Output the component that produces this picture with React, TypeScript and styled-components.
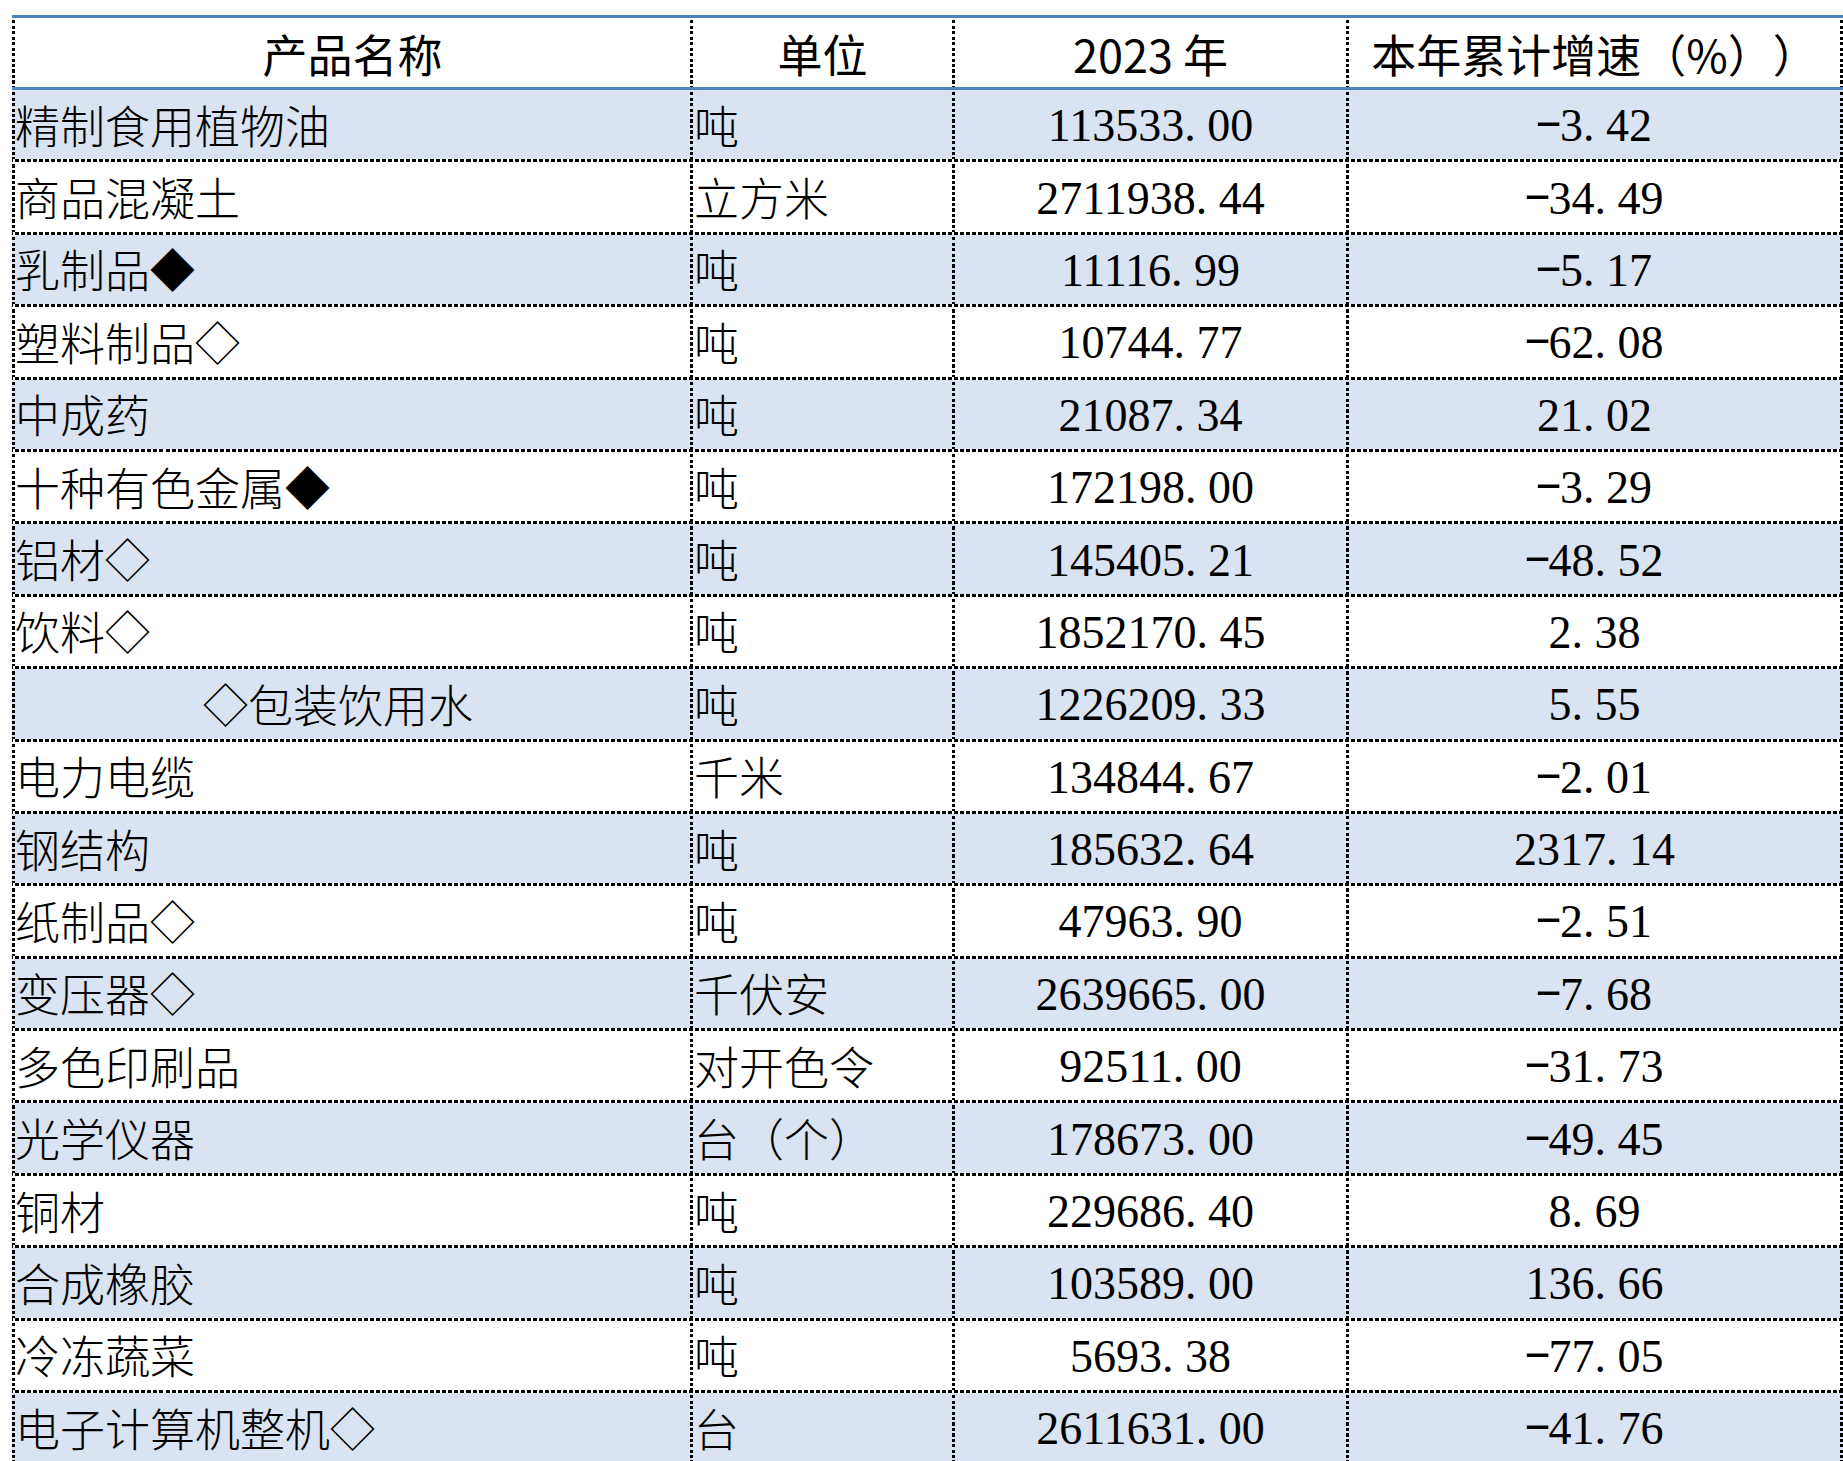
import React from "react";
import styled, { createGlobalStyle } from "styled-components";

const GlobalStyle = createGlobalStyle`
  html, body {
    margin: 0;
    padding: 0;
    background: #ffffff;
  }
  body {
    font-family: "Noto Sans CJK SC", "Noto Sans", sans-serif;
    color: #000;
    text-spacing-trim: space-all;
  }
`;

const BLUE = "#4f81bd";
const SHADE = "#dae3f1";
const COLS = "678px 262px 394px 497px";
const DOTS_H = "repeating-linear-gradient(90deg, #000 0 4px, transparent 4px 6px)";
const DOTS_V = "repeating-linear-gradient(180deg, #000 0 3px, transparent 3px 5px)";

const Sheet = styled.div`
  margin: 15px 0 0 12px;
  width: 1831px;
  height: 1446px;
  overflow: hidden;
`;

const HeaderRow = styled.div`
  display: grid;
  grid-template-columns: ${COLS};
  box-sizing: border-box;
  height: 75px;
  border-top: 3px solid ${BLUE};
  border-bottom: 3px solid ${BLUE};
  background: #fff;
`;

const Row = styled.div<{ $shaded: boolean }>`
  display: grid;
  grid-template-columns: ${COLS};
  box-sizing: border-box;
  height: 72.4px;
  border-bottom: 3px solid transparent;
  border-image: ${DOTS_H} 3;
  background: ${(p) => (p.$shaded ? SHADE : "#fff")};
  background-clip: padding-box;
`;

const Cell = styled.div<{ $align?: "left" | "center"; $pad?: number }>`
  box-sizing: border-box;
  display: flex;
  align-items: center;
  justify-content: ${(p) => (p.$align === "center" ? "center" : "flex-start")};
  padding-left: ${(p) => p.$pad ?? 0}px;
  border-left: 3px solid transparent;
  border-image: ${DOTS_V} 3;
  white-space: nowrap;
  overflow: hidden;
  &:last-child {
    border-right: 3px solid transparent;
  }
`;

const HeadText = styled.span`
  font-family: "Noto Sans CJK SC", "Noto Sans", sans-serif;
  font-size: 45px;
  font-weight: 400;
  line-height: 1;
  padding-top: 2px;
  text-spacing-trim: space-all;
`;

const NameText = styled.span`
  font-family: "Noto Sans CJK SC", "Noto Sans", sans-serif;
  font-size: 45px;
  font-weight: 300;
  line-height: 1;
  margin-top: -1px;
  text-spacing-trim: space-all;
`;

const NumText = styled.span`
  font-family: "Liberation Serif", "Times New Roman", serif;
  font-size: 46px;
  line-height: 1;
  margin-top: 3px;
`;

const Dot = styled.span`
  display: inline-block;
  width: 0.5em;
  text-align: left;
`;

const Minus = styled.span`
  display: inline-block;
  width: 0.5em;
  text-align: center;
  transform: translateY(-0.13em) scaleX(1.8);
`;

type Item = {
  name: string;
  unit: string;
  value: string;
  growth: string;
  indent?: number;
};

const items: Item[] = [
  { name: "精制食用植物油", unit: "吨", value: "113533.00", growth: "-3.42" },
  { name: "商品混凝土", unit: "立方米", value: "2711938.44", growth: "-34.49" },
  { name: "乳制品◆", unit: "吨", value: "11116.99", growth: "-5.17" },
  { name: "塑料制品◇", unit: "吨", value: "10744.77", growth: "-62.08" },
  { name: "中成药", unit: "吨", value: "21087.34", growth: "21.02" },
  { name: "十种有色金属◆", unit: "吨", value: "172198.00", growth: "-3.29" },
  { name: "铝材◇", unit: "吨", value: "145405.21", growth: "-48.52" },
  { name: "饮料◇", unit: "吨", value: "1852170.45", growth: "2.38" },
  { name: "◇包装饮用水", unit: "吨", value: "1226209.33", growth: "5.55", indent: 188 },
  { name: "电力电缆", unit: "千米", value: "134844.67", growth: "-2.01" },
  { name: "钢结构", unit: "吨", value: "185632.64", growth: "2317.14" },
  { name: "纸制品◇", unit: "吨", value: "47963.90", growth: "-2.51" },
  { name: "变压器◇", unit: "千伏安", value: "2639665.00", growth: "-7.68" },
  { name: "多色印刷品", unit: "对开色令", value: "92511.00", growth: "-31.73" },
  { name: "光学仪器", unit: "台（个）", value: "178673.00", growth: "-49.45" },
  { name: "铜材", unit: "吨", value: "229686.40", growth: "8.69" },
  { name: "合成橡胶", unit: "吨", value: "103589.00", growth: "136.66" },
  { name: "冷冻蔬菜", unit: "吨", value: "5693.38", growth: "-77.05" },
  { name: "电子计算机整机◇", unit: "台", value: "2611631.00", growth: "-41.76" },
];

function Num({ text }: { text: string }) {
  return (
    <NumText>
      {text.split("").map((ch, i) =>
        ch === "." ? (
          <Dot key={i}>.</Dot>
        ) : ch === "-" ? (
          <Minus key={i}>-</Minus>
        ) : (
          <React.Fragment key={i}>{ch}</React.Fragment>
        )
      )}
    </NumText>
  );
}

export default function App() {
  return (
    <>
      <GlobalStyle />
      <Sheet>
        <HeaderRow>
          <Cell $align="center">
            <HeadText>产品名称</HeadText>
          </Cell>
          <Cell $align="center">
            <HeadText>单位</HeadText>
          </Cell>
          <Cell $align="center">
            <HeadText>2023 年</HeadText>
          </Cell>
          <Cell $align="center">
            <HeadText>本年累计增速（%））</HeadText>
          </Cell>
        </HeaderRow>
        {items.map((it, i) => (
          <Row key={it.name} $shaded={i % 2 === 0}>
            <Cell $pad={it.indent ?? 0}>
              <NameText>{it.name}</NameText>
            </Cell>
            <Cell $pad={1}>
              <NameText>{it.unit}</NameText>
            </Cell>
            <Cell $align="center">
              <Num text={it.value} />
            </Cell>
            <Cell $align="center">
              <Num text={it.growth} />
            </Cell>
          </Row>
        ))}
      </Sheet>
    </>
  );
}
